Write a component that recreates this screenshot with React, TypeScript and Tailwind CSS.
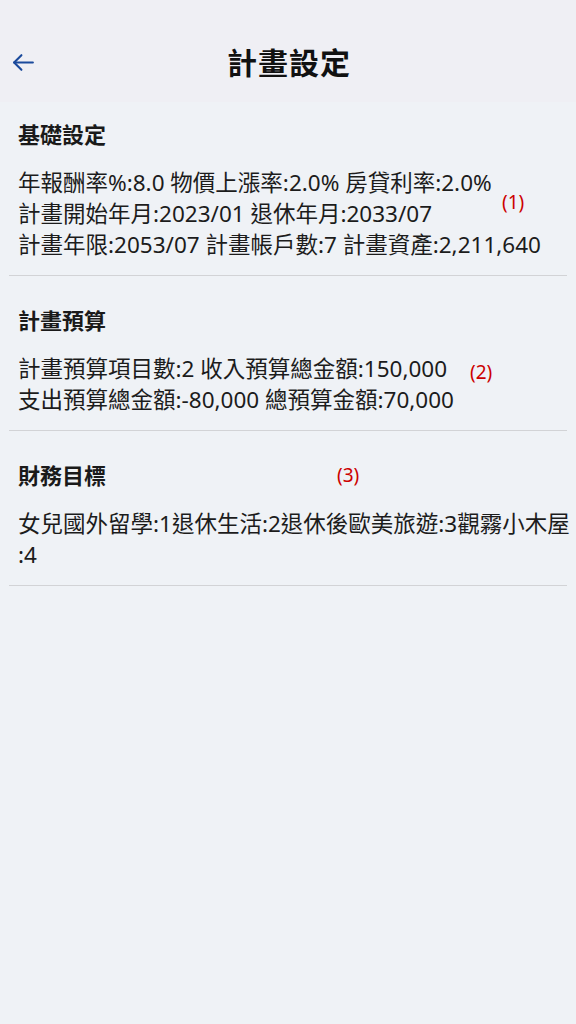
import React from "react";

const font = { fontFamily: '"Noto Sans", "Noto Sans CJK TC", sans-serif' };

function Section({
  title,
  lines,
  first,
  note,
}: {
  title: string;
  lines: string[];
  first?: boolean;
  note?: React.ReactNode;
}) {
  return (
    <div className="relative">
      <div className={`${first ? "pt-[18px]" : "pt-[30px]"} pl-[18px] pr-[2px]`}>
        <div className="text-[22px] leading-[28px] font-bold text-[#1a1a1a]">{title}</div>
        <div className="mt-[19px] text-[22.5px] leading-[31px] text-[#1c1c1c]">
          {lines.map((l, i) => (
            <div key={i} className="whitespace-nowrap">
              {l}
            </div>
          ))}
        </div>
      </div>
      <div className="mx-[9px] mt-[15px] h-px bg-[#d2d3d6]" />
      {note}
    </div>
  );
}

export default function App() {
  return (
    <div className="w-[576px] h-[1024px] bg-[#eff2f6] flex flex-col" style={font}>
      <div className="h-[102px] bg-[#efeff4] relative flex items-end">
        <div className="h-[78px] w-full flex items-center justify-center relative">
          <button className="absolute left-[11px] top-[26px] text-[#1b4a9c]">
            <svg width="25" height="25" viewBox="0 0 24 24" fill="none" stroke="currentColor" strokeWidth="2" strokeLinecap="round" strokeLinejoin="round">
              <path d="M21 12H3" />
              <path d="M10 5l-7 7 7 7" />
            </svg>
          </button>
          <div className="text-[30px] font-bold text-[#111] tracking-[1px] -mt-[2px] pl-[2px]">計畫設定</div>
        </div>
      </div>
      <div className="flex-1">
        <Section
          first
          title="基礎設定"
          lines={[
            "年報酬率%:8.0 物價上漲率:2.0% 房貸利率:2.0%",
            "計畫開始年月:2023/01 退休年月:2033/07",
            "計畫年限:2053/07 計畫帳戶數:7 計畫資產:2,211,640",
          ]}
          note={<span className="absolute left-[502px] top-[86px] text-[19px] text-[#cc0000]">(1)</span>}
        />
        <Section
          title="計畫預算"
          lines={["計畫預算項目數:2 收入預算總金額:150,000", "支出預算總金額:-80,000 總預算金額:70,000"]}
          note={<span className="absolute left-[470px] top-[82px] text-[19px] text-[#cc0000]">(2)</span>}
        />
        <Section
          title="財務目標"
          lines={["女兒國外留學:1退休生活:2退休後歐美旅遊:3觀霧小木屋", ":4"]}
          note={<span className="absolute left-[337px] top-[30px] text-[19px] text-[#cc0000]">(3)</span>}
        />
      </div>
    </div>
  );
}
